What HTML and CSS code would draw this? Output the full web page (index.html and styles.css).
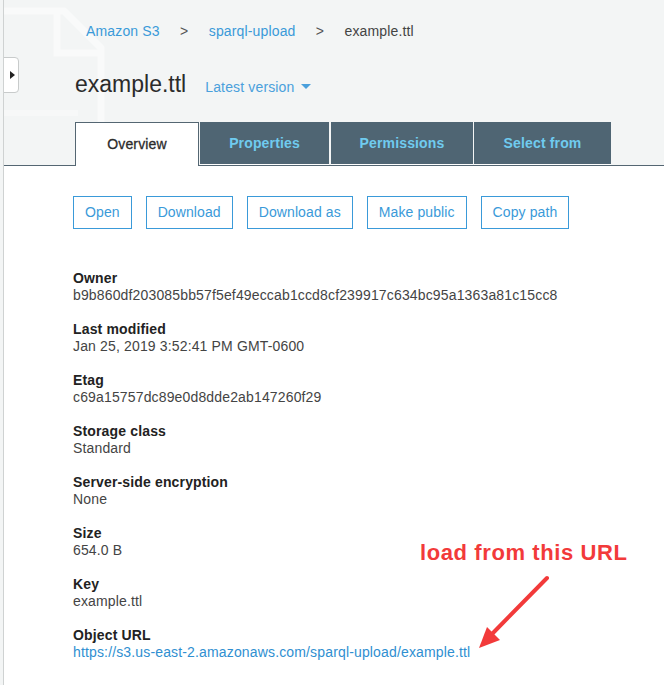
FILE: index.html
```html
<!DOCTYPE html>
<html lang="en">
<head>
<meta charset="utf-8">
<title>example.ttl</title>
<link rel="stylesheet" href="styles.css">
</head>
<body>
<div class="app">
  <svg class="bg-doc" width="110" height="130" viewBox="0 0 110 130" aria-hidden="true">
    <path d="M-10 11 H60 L97 48 V122" fill="none" stroke="#f9fafa" stroke-width="7" stroke-linejoin="round"/>
    <path d="M53 14 V53 H94" fill="none" stroke="#f9fafa" stroke-width="7"/>
    <path d="M-10 113 H74" fill="none" stroke="#f7f8f8" stroke-width="6"/>
  </svg>
  <button class="toggle" aria-label="Toggle sidebar"><span class="toggle-arrow"></span></button>

  <header class="header">
    <nav class="crumbs">
      <a class="crumb-link" href="#">Amazon S3</a><span class="sep">&gt;</span><a class="crumb-link" href="#">sparql-upload</a><span class="sep">&gt;</span><span class="crumb-current">example.ttl</span>
    </nav>
    <div class="title-row">
      <h1 class="title">example.ttl</h1>
      <a class="version" href="#">Latest version</a><span class="caret"></span>
    </div>
    <div class="tabs">
      <div class="tab tab-active">Overview</div>
      <div class="tab tab-dark tab-props">Properties</div>
      <div class="tab tab-dark tab-perms">Permissions</div>
      <div class="tab tab-dark tab-select">Select from</div>
    </div>
  </header>

  <main class="content">
    <div class="actions">
      <button class="btn">Open</button>
      <button class="btn">Download</button>
      <button class="btn">Download as</button>
      <button class="btn">Make public</button>
      <button class="btn">Copy path</button>
    </div>

    <dl class="fields">
      <div class="field"><dt>Owner</dt><dd>b9b860df203085bb57f5ef49eccab1ccd8cf239917c634bc95a1363a81c15cc8</dd></div>
      <div class="field"><dt>Last modified</dt><dd>Jan 25, 2019 3:52:41 PM GMT-0600</dd></div>
      <div class="field"><dt>Etag</dt><dd>c69a15757dc89e0d8dde2ab147260f29</dd></div>
      <div class="field"><dt>Storage class</dt><dd>Standard</dd></div>
      <div class="field"><dt>Server-side encryption</dt><dd>None</dd></div>
      <div class="field"><dt>Size</dt><dd>654.0 B</dd></div>
      <div class="field"><dt>Key</dt><dd>example.ttl</dd></div>
      <div class="field"><dt>Object URL</dt><dd><a class="url" href="#">https://s3.us-east-2.amazonaws.com/sparql-upload/example.ttl</a></dd></div>
    </dl>
  </main>

  <div class="note">load from this URL</div>
  <svg class="arrow" width="664" height="685" viewBox="0 0 664 685" aria-hidden="true">
    <line x1="547" y1="578" x2="492" y2="634" stroke="#f23a3a" stroke-width="4" stroke-linecap="round"/>
    <polygon points="479,648 487,627 500,640" fill="#f23a3a"/>
  </svg>
</div>
</body>
</html>
```

FILE: styles.css
```css
html, body {
  margin: 0;
  padding: 0;
  background: #f3f5f5;
}

body {
  font-family: "Liberation Sans", Arial, sans-serif;
  font-size: 14px;
  letter-spacing: 0.15px;
  color: #444;
}

.app {
  position: relative;
  margin-left: 3px;
  border-left: 1px solid #cfd2d2;
  min-height: 685px;
  background: #fff;
  overflow: hidden;
}

.app::before {
  content: "";
  position: absolute;
  left: 0;
  top: 0;
  right: 0;
  height: 165px;
  background: #f3f5f5;
  z-index: 0;
}

.bg-doc {
  position: absolute;
  left: 0;
  top: 0;
  z-index: 0;
}

.toggle {
  position: absolute;
  left: -1px;
  top: 57px;
  width: 16px;
  height: 36px;
  padding: 0;
  background: #fff;
  border: 1px solid #c8cbcb;
  border-radius: 0 4px 4px 0;
  z-index: 2;
}

.toggle-arrow {
  display: block;
  width: 0;
  height: 0;
  margin-left: 6px;
  border-top: 4px solid transparent;
  border-bottom: 4px solid transparent;
  border-left: 5px solid #222;
}

.header {
  position: relative;
  z-index: 1;
  padding-top: 21px;
}

.crumbs {
  padding-left: 82px;
  line-height: 20px;
  height: 20px;
  white-space: nowrap;
}

.crumb-link {
  color: #3a9ad9;
  text-decoration: none;
}

.sep {
  display: inline-block;
  width: 49px;
  text-align: center;
  color: #555;
}

.crumb-current {
  color: #444;
}

.title-row {
  display: flex;
  align-items: baseline;
  margin-top: 28px;
  padding-left: 71px;
  height: 30px;
}

.title {
  margin: 0;
  font-size: 23px;
  font-weight: normal;
  line-height: 30px;
  letter-spacing: 0;
  color: #2b2b2b;
}

.version {
  margin-left: 19px;
  color: #4aa0dc;
  text-decoration: none;
}

.caret {
  align-self: center;
  margin-left: 7px;
  margin-top: 4px;
  width: 0;
  height: 0;
  border-left: 5px solid transparent;
  border-right: 5px solid transparent;
  border-top: 5px solid #4aa0dc;
}

.tabs {
  display: flex;
  margin-top: 23px;
  padding-left: 71px;
  border-bottom: 1px solid #546672;
}

.tab {
  box-sizing: border-box;
  height: 43px;
  line-height: 42px;
  text-align: center;
  font-size: 14px;
}

.tab-active {
  width: 124px;
  margin-bottom: -1px;
  height: 44px;
  background: #fff;
  border: 1px solid #546672;
  border-bottom: none;
  color: #2b2b2b;
  -webkit-text-stroke: 0.3px #2b2b2b;
}

.tab-dark {
  margin-left: 1px;
  background: #4f6573;
  border-bottom: 1px solid #fff;
  color: #6fcbef;
  font-weight: bold;
}

.tab-props { width: 129px; }
.tab-perms { width: 142px; margin-left: 2px; }
.tab-select { width: 137px; }

.content {
  position: relative;
  z-index: 1;
  background: #fff;
  padding: 30px 0 40px 69px;
}

.actions {
  display: flex;
  gap: 14px;
}

.btn {
  font-family: inherit;
  font-size: 14px;
  letter-spacing: 0.1px;
  line-height: 17px;
  padding: 7px 11px;
  background: #fff;
  color: #3a9ad9;
  border: 1px solid #3a9ad9;
  border-radius: 0;
}

.fields {
  margin: 40px 0 0 0;
}

.field {
  margin-bottom: 16px;
}

.field dt {
  font-weight: bold;
  color: #222;
  line-height: 18px;
}

.field dd {
  margin: 0;
  line-height: 17px;
  color: #444;
}

.url {
  color: #2f8fd1;
  text-decoration: none;
}

.note {
  position: absolute;
  left: 416px;
  top: 540px;
  font-size: 22px;
  font-weight: bold;
  line-height: 26px;
  letter-spacing: 0.6px;
  color: #f23a3a;
  z-index: 3;
  white-space: nowrap;
}

.arrow {
  position: absolute;
  left: -4px;
  top: 0;
  z-index: 3;
  pointer-events: none;
}
```
